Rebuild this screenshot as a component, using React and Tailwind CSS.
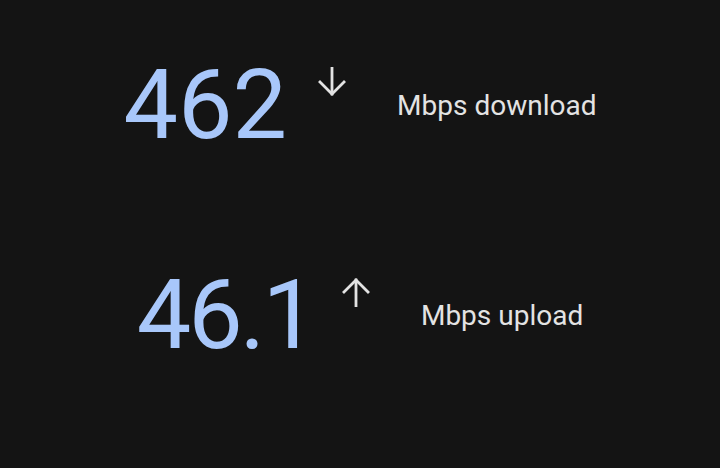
import React from "react";

function Arrow({ up }) {
  // simple stroked arrow, head on top or bottom
  return (
    <svg width="30" height="30" viewBox="0 0 30 30" fill="none" stroke="#e3e3e3" strokeWidth="2.8" strokeLinecap="square">
      {up ? (
        <>
          <path d="M15 3v26" />
          <path d="M3 15L15 3l12 12" strokeLinejoin="miter" />
        </>
      ) : (
        <>
          <path d="M15 1v26" />
          <path d="M3 15l12 12 12-12" strokeLinejoin="miter" />
        </>
      )}
    </svg>
  );
}

function SpeedRow({ value, label, up, numClass, arrowClass }) {
  return (
    <div className="flex items-center justify-center">
      <div className="flex items-start">
        <span className={"text-[97px] leading-none text-[#a8c7fa] " + numClass}>{value}</span>
        <div className={arrowClass}>
          <Arrow up={up} />
        </div>
      </div>
      <span className="ml-[50px] text-[28px] leading-none text-[#e3e3e3]">{label}</span>
    </div>
  );
}

export default function App() {
  return (
    <div
      className="h-[468px] w-[720px] bg-[#141414] pt-[57px] flex flex-col gap-[113px]"
      style={{ fontFamily: "Roboto, 'Noto Sans', sans-serif" }}
    >
      <SpeedRow value="462" label="Mbps download" numClass="" arrowClass="mt-[10px] ml-[30px]" />
      <SpeedRow value="46.1" label="Mbps upload" up numClass="tracking-[-3px]" arrowClass="mt-[10px] ml-[27px]" />
    </div>
  );
}
